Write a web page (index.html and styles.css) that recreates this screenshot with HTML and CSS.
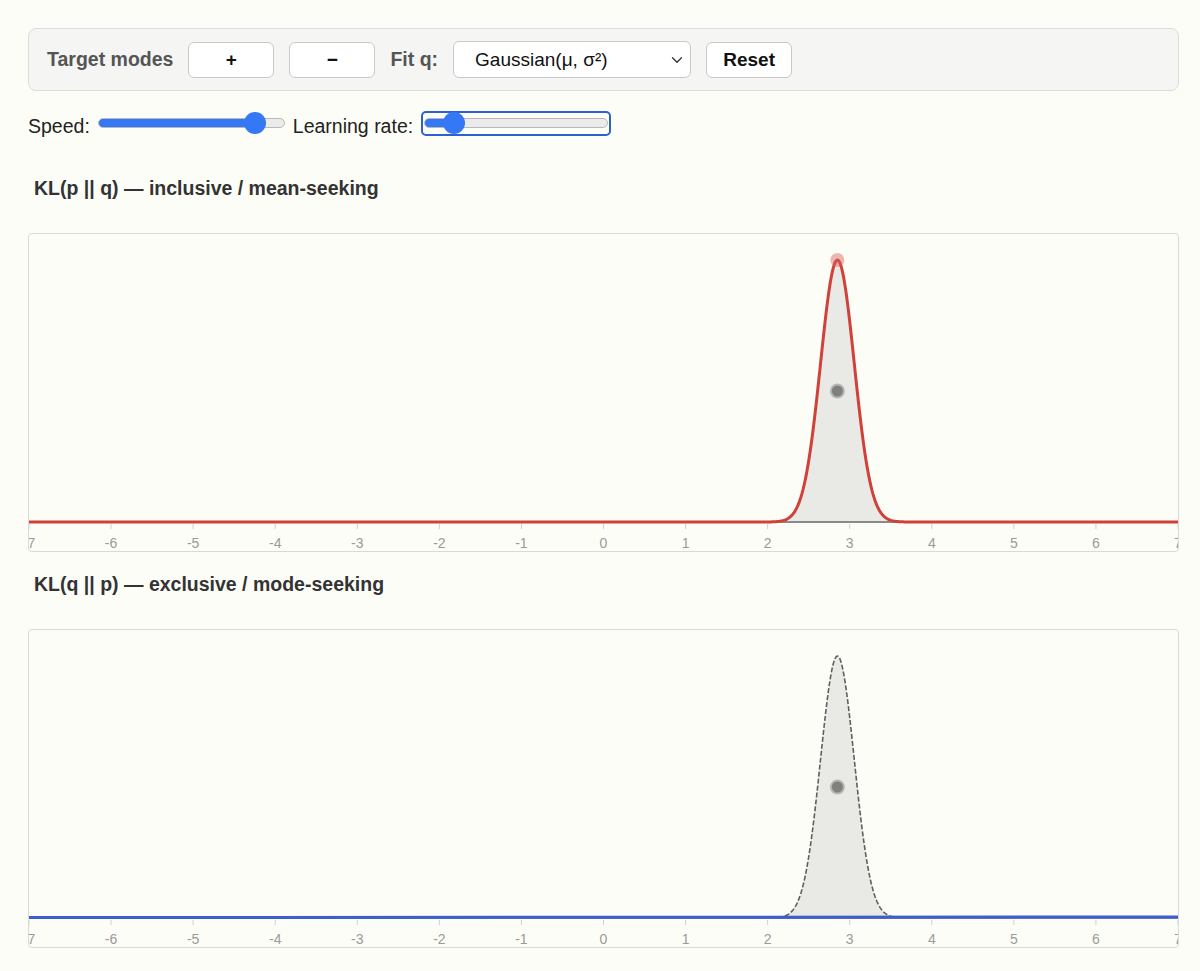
FILE: index.html
```html
<!DOCTYPE html>
<html lang="en">
<head>
<meta charset="utf-8">
<title>KL divergence demo</title>
<link rel="stylesheet" href="styles.css">
</head>
<body>
<div class="page">
  <div class="panel">
    <span class="plabel">Target modes</span>
    <button class="btn">+</button>
    <button class="btn">−</button>
    <span class="plabel">Fit q:</span>
    <div class="selwrap">
      <select class="sel"><option>Gaussian(μ, σ²)</option></select>
      <svg class="chev" width="12" height="8" viewBox="0 0 12 8"><path d="M1.5 1.8 L6 6.2 L10.5 1.8" fill="none" stroke="#333" stroke-width="1.3" stroke-linecap="round" stroke-linejoin="round"/></svg>
    </div>
    <button class="btn btn-reset">Reset</button>
  </div>

  <div class="row">
    <span class="rlabel">Speed:</span>
    <input type="range" class="slider s-speed" min="0" max="100" value="89" style="--v:86%">
    <span class="rlabel">Learning rate:</span>
    <span class="focusbox"><input type="range" class="slider s-lr" min="0" max="100" value="11" style="--v:16%"></span>
  </div>

  <h3 class="ttl ttl-first">KL(p || q) — inclusive / mean-seeking</h3>
  <div class="chart">
    <svg class="plot" width="1149" height="317" viewBox="0 0 1149 317">
      <path class="p-fill" d=""/>
      <line class="axis" x1="0" y1="288" x2="1149" y2="288"/>
      <path class="ticks" d="M0,290v5M82.07,290v5M164.14,290v5M246.21,290v5M328.29,290v5M410.36,290v5M492.43,290v5M574.5,290v5M656.57,290v5M738.64,290v5M820.71,290v5M902.79,290v5M984.86,290v5M1066.93,290v5M1149,290v5"/>
      <path class="q-red" d=""/>
      <circle class="dot-peak" cx="808.4" cy="26" r="7"/>
      <circle class="dot-out" cx="808.4" cy="157" r="7.5"/>
      <circle class="dot-in" cx="808.4" cy="157" r="5.5"/>
      <g class="tl">
        <text x="0" y="314">-7</text><text x="82.07" y="314">-6</text><text x="164.14" y="314">-5</text><text x="246.21" y="314">-4</text><text x="328.29" y="314">-3</text><text x="410.36" y="314">-2</text><text x="492.43" y="314">-1</text><text x="574.5" y="314">0</text><text x="656.57" y="314">1</text><text x="738.64" y="314">2</text><text x="820.71" y="314">3</text><text x="902.79" y="314">4</text><text x="984.86" y="314">5</text><text x="1066.93" y="314">6</text><text x="1149" y="314">7</text>
      </g>
    </svg>
  </div>

  <h3 class="ttl">KL(q || p) — exclusive / mode-seeking</h3>
  <div class="chart">
    <svg class="plot" width="1149" height="317" viewBox="0 0 1149 317">
      <path class="p-fill" d=""/>
      <path class="p-dash" d=""/>
      <line class="axis" x1="0" y1="288" x2="1149" y2="288"/>
      <path class="ticks" d="M0,290v5M82.07,290v5M164.14,290v5M246.21,290v5M328.29,290v5M410.36,290v5M492.43,290v5M574.5,290v5M656.57,290v5M738.64,290v5M820.71,290v5M902.79,290v5M984.86,290v5M1066.93,290v5M1149,290v5"/>
      <path class="q-blue" d="M0,287.5 L1149,287"/>
      <circle class="dot-out" cx="808.4" cy="157" r="7.5"/>
      <circle class="dot-in" cx="808.4" cy="157" r="5.5"/>
      <g class="tl">
        <text x="0" y="314">-7</text><text x="82.07" y="314">-6</text><text x="164.14" y="314">-5</text><text x="246.21" y="314">-4</text><text x="328.29" y="314">-3</text><text x="410.36" y="314">-2</text><text x="492.43" y="314">-1</text><text x="574.5" y="314">0</text><text x="656.57" y="314">1</text><text x="738.64" y="314">2</text><text x="820.71" y="314">3</text><text x="902.79" y="314">4</text><text x="984.86" y="314">5</text><text x="1066.93" y="314">6</text><text x="1149" y="314">7</text>
      </g>
    </svg>
  </div>
</div>
<script src="script.js"></script>
</body>
</html>
```

FILE: styles.css
```css
html, body {
  margin: 0;
  padding: 0;
  background: #fdfdf8;
}
body {
  font-family: "Liberation Sans", Arial, sans-serif;
  color: #222;
}
.page {
  padding: 28px 21px 0 28px;
}
.panel {
  display: flex;
  align-items: center;
  gap: 15px;
  height: 63px;
  box-sizing: border-box;
  padding: 0 18px;
  background: #f5f5f4;
  border: 1px solid #dcdcdc;
  border-radius: 8px;
}
.plabel {
  font-size: 19.5px;
  font-weight: bold;
  color: #555;
}
.btn {
  font-family: "Liberation Sans", Arial, sans-serif;
  width: 86px;
  height: 36px;
  box-sizing: border-box;
  background: #fff;
  border: 1px solid #c9c9c9;
  border-radius: 6px;
  font-size: 19px;
  font-weight: bold;
  color: #111;
  padding: 0;
}
.selwrap {
  position: relative;
  width: 238px;
  height: 37px;
}
.sel {
  -webkit-appearance: none;
  appearance: none;
  width: 100%;
  height: 100%;
  box-sizing: border-box;
  background: #fff;
  border: 1px solid #c9c9c9;
  border-radius: 6px;
  font-family: "Liberation Sans", Arial, sans-serif;
  font-size: 19px;
  color: #111;
  padding: 0 0 0 21px;
}
.chev {
  position: absolute;
  right: 8px;
  top: 15px;
}
.row {
  display: flex;
  align-items: center;
  gap: 8px;
  height: 30px;
  margin-top: 17px;
}
.rlabel {
  font-size: 19.5px;
  color: #222;
  padding-top: 6px;
}
.slider {
  -webkit-appearance: none;
  appearance: none;
  margin: 0;
  height: 22px;
  background: transparent;
}
.s-speed {
  width: 187px;
}
.s-lr {
  width: 184px;
}
.slider::-webkit-slider-runnable-track {
  height: 10px;
  box-sizing: border-box;
  border-radius: 6px;
  border: 1px solid #b8b8b8;
  background: linear-gradient(to right, #3478f6 0, #3478f6 var(--v), #ebebeb var(--v), #ebebeb 100%);
}
.slider::-webkit-slider-thumb {
  -webkit-appearance: none;
  appearance: none;
  width: 22px;
  height: 22px;
  border-radius: 50%;
  background: #3478f6;
  border: none;
  margin-top: -7px;
}
.focusbox {
  display: flex;
  align-items: center;
  padding: 0 1px;
  height: 21px;
  border: 2px solid #2c62cc;
  border-radius: 5px;
}
.ttl {
  margin: 0;
  font-size: 19.5px;
  font-weight: bold;
  color: #333;
  line-height: 22px;
  padding-left: 6px;
  margin-top: 21px;
  margin-bottom: 34px;
}
.ttl-first {
  margin-top: 39px;
}
.chart {
  width: 1151px;
  height: 319px;
  box-sizing: border-box;
  border: 1px solid #d9d9d9;
  border-radius: 4px;
  overflow: hidden;
  background: #fdfdf8;
}
.plot {
  display: block;
}
.p-fill {
  fill: #e9e9e5;
  stroke: none;
}
.p-dash {
  fill: none;
  stroke: #5f5f5f;
  stroke-width: 1.6;
  stroke-dasharray: 5 2;
}
.axis {
  stroke: #8a8a8a;
  stroke-width: 2;
}
.ticks {
  stroke: #cfcfcf;
  stroke-width: 1;
  fill: none;
}
.q-red {
  fill: none;
  stroke: #d0413a;
  stroke-width: 3;
  stroke-linejoin: round;
}
.q-blue {
  fill: none;
  stroke: #3a5fd0;
  stroke-width: 3;
}
.dot-peak {
  fill: rgba(214, 96, 90, 0.45);
}
.dot-out {
  fill: rgba(140, 140, 140, 0.55);
}
.dot-in {
  fill: rgba(110, 110, 110, 0.75);
}
.tl text {
  font-family: "Liberation Sans", Arial, sans-serif;
  font-size: 14px;
  fill: #9a9a9a;
  text-anchor: middle;
}
```

FILE: script.js
```js
(function () {
  var W = 1149, BASE = 288;
  function curve(mu, s, amp) {
    var pts = [];
    for (var i = 0; i <= W; i++) {
      var v = i / W * 14 - 7;
      var y = BASE - amp * Math.exp(-((v - mu) * (v - mu)) / (2 * s * s));
      pts.push(i + ',' + y.toFixed(2));
    }
    return 'M' + pts.join('L');
  }
  var p = curve(2.85, 0.205, 262);
  var fills = document.querySelectorAll('.p-fill');
  for (var a = 0; a < fills.length; a++) {
    fills[a].setAttribute('d', p + 'L' + W + ',' + BASE + 'L0,' + BASE + 'Z');
  }
  var dashes = document.querySelectorAll('.p-dash');
  for (var b = 0; b < dashes.length; b++) {
    dashes[b].setAttribute('d', p);
  }
  var reds = document.querySelectorAll('.q-red');
  for (var c = 0; c < reds.length; c++) {
    reds[c].setAttribute('d', curve(2.85, 0.205, 262));
  }
})();
```
